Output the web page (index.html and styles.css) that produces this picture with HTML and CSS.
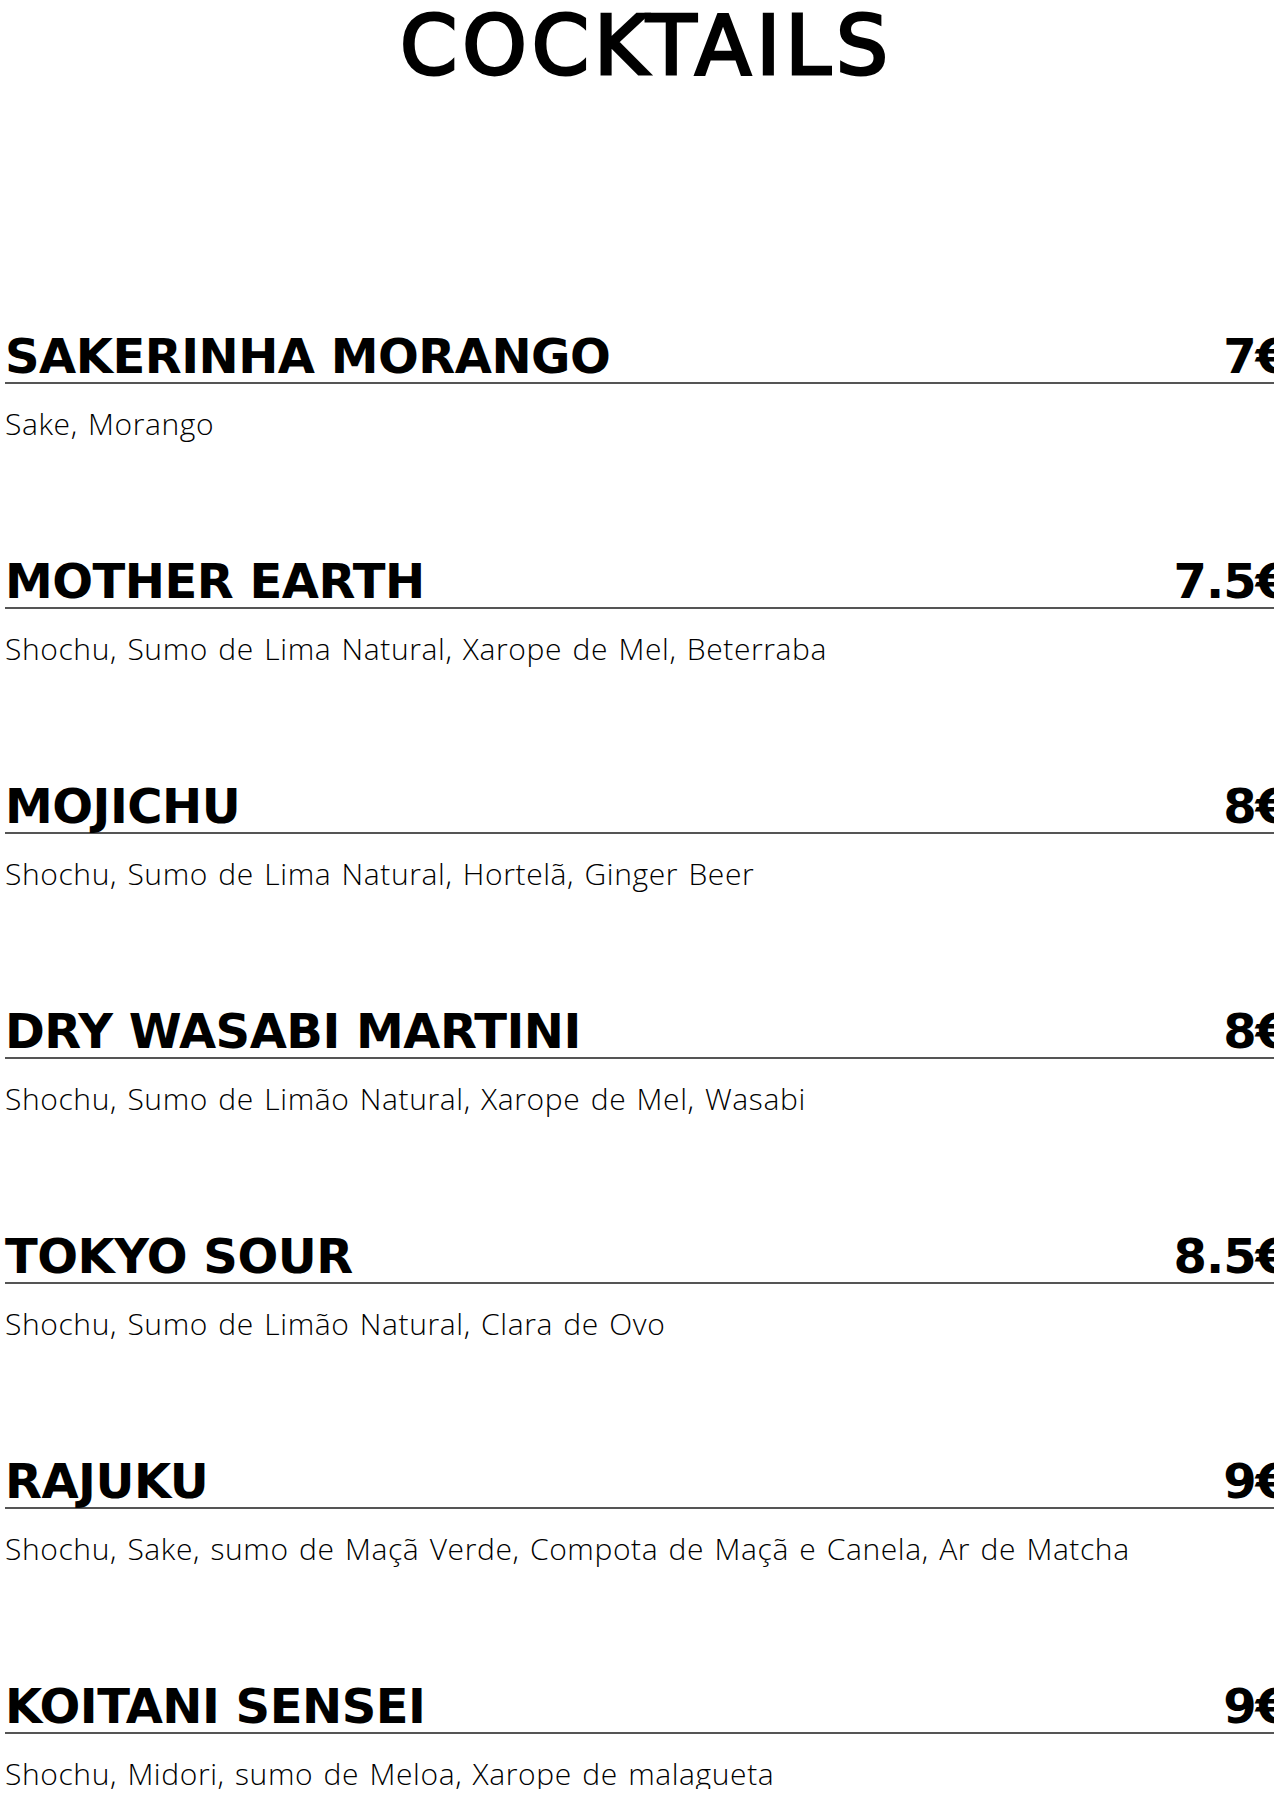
FILE: index.html
```html
<!DOCTYPE html>
<html lang="pt">
<head>
<meta charset="utf-8">
<title>Cocktails</title>
<link rel="stylesheet" href="styles.css">
</head>
<body>
<main class="page">
  <h1 class="title">COCKTAILS</h1>
  <section class="menu">
    <article class="item">
      <div class="item-head"><h2 class="name">SAKERINHA MORANGO</h2><span class="price">7€</span></div>
      <p class="desc">Sake, Morango</p>
    </article>
    <article class="item">
      <div class="item-head"><h2 class="name">MOTHER EARTH</h2><span class="price">7.5€</span></div>
      <p class="desc">Shochu, Sumo de Lima Natural, Xarope de Mel, Beterraba</p>
    </article>
    <article class="item">
      <div class="item-head"><h2 class="name">MOJICHU</h2><span class="price">8€</span></div>
      <p class="desc">Shochu, Sumo de Lima Natural, Hortelã, Ginger Beer</p>
    </article>
    <article class="item">
      <div class="item-head"><h2 class="name">DRY WASABI MARTINI</h2><span class="price">8€</span></div>
      <p class="desc">Shochu, Sumo de Limão Natural, Xarope de Mel, Wasabi</p>
    </article>
    <article class="item">
      <div class="item-head"><h2 class="name">TOKYO SOUR</h2><span class="price">8.5€</span></div>
      <p class="desc">Shochu, Sumo de Limão Natural, Clara de Ovo</p>
    </article>
    <article class="item">
      <div class="item-head"><h2 class="name">RAJUKU</h2><span class="price">9€</span></div>
      <p class="desc">Shochu, Sake, sumo de Maçã Verde, Compota de Maçã e Canela, Ar de Matcha</p>
    </article>
    <article class="item">
      <div class="item-head"><h2 class="name">KOITANI SENSEI</h2><span class="price">9€</span></div>
      <p class="desc">Shochu, Midori, sumo de Meloa, Xarope de malagueta</p>
    </article>
  </section>
</main>
</body>
</html>
```

FILE: styles.css
```css
html, body {
  margin: 0;
  padding: 0;
  background: #ffffff;
  overflow: hidden;
}

.page {
  width: 1283px;
  padding-left: 5px;
  color: #000;
}

.title {
  margin: 5px 0 0 0;
  font-family: "DejaVu Sans", sans-serif;
  font-weight: normal;
  font-size: 82px;
  line-height: 82px;
  letter-spacing: 5px;
  -webkit-text-stroke: 3px #000;
  text-align: center;
}

.menu {
  display: flex;
  flex-direction: column;
  gap: 118px;
  margin-top: 245px;
}

.item-head {
  display: flex;
  justify-content: space-between;
  align-items: flex-end;
  padding-bottom: 2px;
  border-bottom: 2px solid #555;
}

.name, .price {
  margin: 0;
  font-family: "DejaVu Sans", sans-serif;
  font-weight: bold;
  font-size: 48px;
  line-height: 48px;
  letter-spacing: -0.5px;
}

.price {
  letter-spacing: -1px;
}

.desc {
  margin: 25px 0 0 0;
  font-family: "Open Sans", sans-serif;
  font-weight: 300;
  font-size: 30px;
  line-height: 30px;
  letter-spacing: 0.6px;
  word-spacing: 2px;
  color: #000;
}
```
